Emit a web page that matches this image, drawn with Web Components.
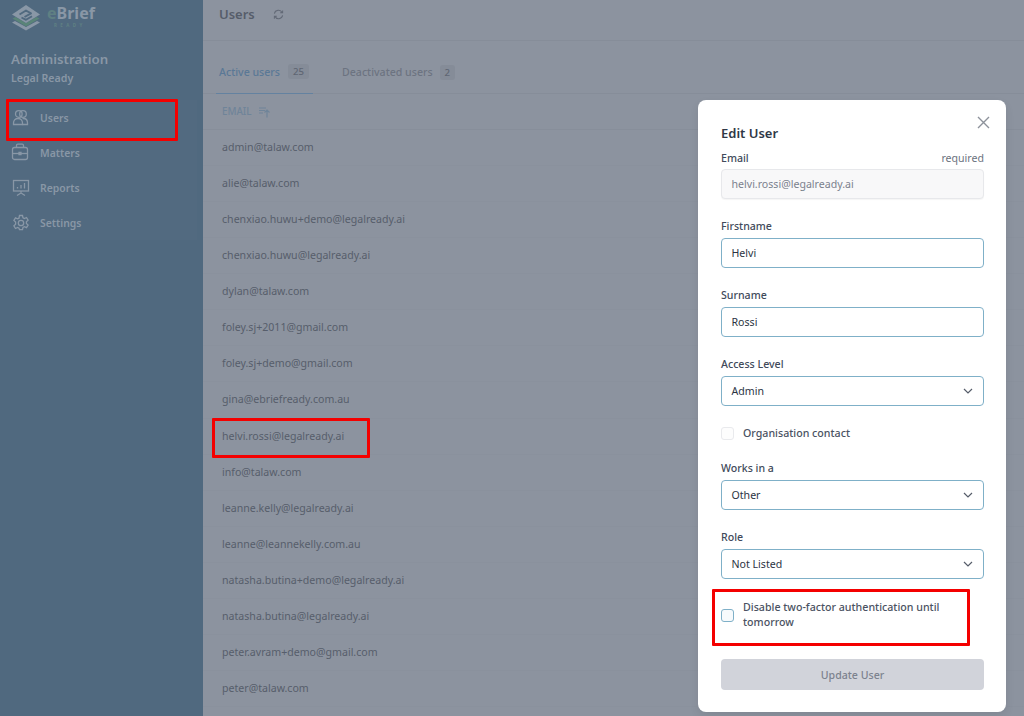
<!DOCTYPE html>
<html>
<head>
<meta charset="utf-8">
<title>Users</title>
<style>
  html, body { margin: 0; height: 100%; overflow: hidden; }
  body { font-family: "Noto Sans", "Open Sans", sans-serif; }
</style>
</head>
<body>
<app-page></app-page>
<script>
const ICONS = {
  users: '<circle cx="7.800" cy="6" r="3.300"/><circle cx="12" cy="6" r="3.300"/><path d="M2.500 16.500v-1.500c0-2.700 2-4.500 4.500-4.500s4.500 1.800 4.500 4.500v1.500z"/><path d="M11.500 10.500h1c2.400 0 4 1.800 4 4.500v1.500h-5"/>',
  matters: '<rect x="1.500" y="4.500" width="15" height="12" rx="2"/><path d="M5.500 4.500V2.500a1.300 1.300 0 0 1 1.300-1.300h4.400a1.300 1.300 0 0 1 1.300 1.300v2"/><path d="M1.500 10.500h15"/><path d="M8 9.500h2v2H8z"/>',
  reports: '<rect x="2.500" y="2.500" width="15" height="10.500"/><path d="M6.500 10.500V9M10 10.500V7M13.500 10.500V5"/><path d="M10 13v2M6 17.500l4-2.500 4 2.500"/>',
  settings: '<path d="M8.500 2.500h3l.5 2.300 1.400.7 2.100-1 1.600 2.600-1.700 1.600v1.800l1.700 1.600-1.600 2.600-2.100-1-1.400.7-.5 2.300h-3L8 15.200l-1.400-.7-2.100 1-1.600-2.600 1.700-1.600V9.100L2.900 7.500l1.600-2.600 2.100 1 1.400-.7z"/><circle cx="10" cy="10" r="2.700"/>'
};

class NavItem extends HTMLElement {
  connectedCallback() {
    this.attachShadow({ mode: 'open' });
    this.shadowRoot.innerHTML = `
      <style>
        :host { display: flex; align-items: center; height: 35px; padding-left: 11px; gap: 9px;
          background: rgba(255,255,255,.012); font-size: 10.400px; font-weight: 600; color: #8997a6; }
        svg { width: 20px; height: 20px; fill: none; stroke: #8997a6; stroke-width: 1.300; }
      </style>
      <svg viewBox="0 0 20 20">${ICONS[this.getAttribute('icon')]}</svg>
      <slot></slot>`;
  }
}
customElements.define('nav-item', NavItem);

class SideBar extends HTMLElement {
  connectedCallback() {
    this.attachShadow({ mode: 'open' });
    this.shadowRoot.innerHTML = `
      <style>
        :host { display: block; width: 203px; flex: none; background: #50697f; box-sizing: border-box; height: 100%; }
        .logo { display: flex; gap: 6px; padding: 4px 0 0 11px; height: 31px; }
        .logo svg { width: 30px; height: 27px; flex: none; }
        .brand { font-size: 16px; font-weight: 700; line-height: 17px; color: #8997a6; padding-top: 1px; }
        .brand b { color: #5f8083; font-weight: 700; }
        .brand small { display: block; font-size: 4.500px; line-height: 7px; letter-spacing: 3.400px; color: #5f8083; padding-left: 7px; }
        .head { padding: 14px 11px 0; height: 53px; box-sizing: border-box; }
        h2 { margin: 0; font-size: 13.300px; line-height: 20px; font-weight: 600; color: #8997a6; }
        p { margin: 0; font-size: 10.600px; line-height: 18px; font-weight: 600; color: #8997a6; }
        nav { margin-top: 12px; margin-right: 6px; }
      </style>
      <div class="logo">
        <svg viewBox="0 0 30 27" stroke-linejoin="round">
          <path d="M1 18.500l3-1.500 11 6 11-6 3 1.500L15 26.500z" fill="#8997a6"/>
          <path d="M1.500 14.500l3-1.500 10.500 6 10.500-6 3 1.500L15 22.500z" fill="#5a8478"/>
          <path d="M1 10.500L15 1l14 9.500L15 19z" fill="#8997a6"/>
          <path d="M8.500 10.500l6.500-4 5 2.800-6.500 3.700M10.500 13.500l4.500 2.300 6-3.600" fill="none" stroke="#50697f" stroke-width="1.900"/>
        </svg>
        <div class="brand"><b>e</b>Brief<small>READY</small></div>
      </div>
      <div class="head"><h2>Administration</h2><p>Legal Ready</p></div>
      <nav>
        <nav-item icon="users">Users</nav-item>
        <nav-item icon="matters">Matters</nav-item>
        <nav-item icon="reports">Reports</nav-item>
        <nav-item icon="settings">Settings</nav-item>
      </nav>`;
  }
}
customElements.define('side-bar', SideBar);

class UserTable extends HTMLElement {
  connectedCallback() {
    this.attachShadow({ mode: 'open' });
    const emails = ['admin@talaw.com', 'alie@talaw.com', 'chenxiao.huwu+demo@legalready.ai',
      'chenxiao.huwu@legalready.ai', 'dylan@talaw.com', 'foley.sj+2011@gmail.com',
      'foley.sj+demo@gmail.com', 'gina@ebriefready.com.au', 'helvi.rossi@legalready.ai',
      'info@talaw.com', 'leanne.kelly@legalready.ai', 'leanne@leannekelly.com.au',
      'natasha.butina+demo@legalready.ai', 'natasha.butina@legalready.ai',
      'peter.avram+demo@gmail.com', 'peter@talaw.com'];
    this.shadowRoot.innerHTML = `
      <style>
        :host { display: block; }
        .th { display: flex; align-items: center; gap: 7px; height: 36px; padding-left: 19px; box-sizing: border-box;
          border-bottom: 1px solid #878e9a; font-size: 9.800px; font-weight: 500; color: #6f8499; }
        .th svg { width: 12px; height: 12px; fill: none; stroke: #6f8499; stroke-width: 1.200; }
        .row { height: 36.070px; line-height: 35.600px; padding-left: 19px; box-sizing: border-box;
          border-bottom: 1px solid #8a919d; font-size: 10.600px; color: #575e6b; }
      </style>
      <div class="th">EMAIL
        <svg viewBox="0 0 12 12"><path d="M0 2h7M0 4.500h6M0 7h4M8 11.500V4M5.500 6.500L8 4l2.500 2.500"/></svg>
      </div>
      ${emails.map(e => `<div class="row">${e}</div>`).join('')}`;
  }
}
customElements.define('user-table', UserTable);

class MainPane extends HTMLElement {
  connectedCallback() {
    this.attachShadow({ mode: 'open' });
    this.shadowRoot.innerHTML = `
      <style>
        :host { display: block; flex: 1; min-width: 0; height: 100%; background: #8c939f; overflow: hidden; }
        header { display: flex; align-items: center; gap: 18px; height: 41px; box-sizing: border-box; padding: 0 0 13px 16px;
          border-bottom: 1px solid #868d99; }
        h1 { margin: 0; font-size: 13px; font-weight: 600; color: #565d6a; }
        header svg { width: 11px; height: 11px; fill: none; stroke: #626976; stroke-width: 1.100; margin-top: 2px; }
        .tabs { display: flex; height: 53px; box-sizing: border-box; padding-left: 13px; border-bottom: 1px solid #868d99; }
        .tab { display: flex; align-items: center; gap: 7px; padding: 9px 3px 0; height: 53px; box-sizing: border-box;
          font-size: 10.600px; font-weight: 500; color: #6c7381; margin-right: 26px; }
        .tab.on { color: #5a7896; border-bottom: 1px solid #6482a0; width: 97px; margin-right: 26px; gap: 8px; }
        .badge { background: #858c98; border-radius: 3px; padding: 0 5px; font-size: 9.600px; line-height: 15px; color: #5f6673; }
      </style>
      <header>
        <h1>Users</h1>
        <svg viewBox="0 0 12 12"><path d="M1.500 5A4.500 4.500 0 0 1 10 4M10.500 7A4.500 4.500 0 0 1 2 8M10.500 1.500V4.200H7.800M1.500 10.500V7.800h2.700"/></svg>
      </header>
      <div class="tabs">
        <div class="tab on">Active users <span class="badge">25</span></div>
        <div class="tab">Deactivated users <span class="badge">2</span></div>
      </div>
      <user-table></user-table>`;
  }
}
customElements.define('main-pane', MainPane);

class FormField extends HTMLElement {
  connectedCallback() {
    this.attachShadow({ mode: 'open' });
    const select = this.hasAttribute('select');
    const disabled = this.hasAttribute('disabled');
    const note = this.getAttribute('note');
    this.shadowRoot.innerHTML = `
      <style>
        :host { display: block; margin-bottom: var(--gap, 19px); }
        .lab { display: flex; justify-content: space-between; height: 16px; line-height: 16px; font-size: 10.600px; font-weight: 500; color: #414a5a; margin-bottom: var(--lab-gap, 4px); }
        .lab span { font-weight: 400; color: #6b7280; }
        .box { display: flex; align-items: center; justify-content: space-between; height: 30px; box-sizing: border-box;
          padding: 0 9.500px; border: 1px solid #7fb0c8; border-radius: 4px; font-size: 10.600px; color: #2b3443; }
        .box.off { background: #f8f8f9; border-color: #e7e8eb; color: #7b818d; box-shadow: 0 1px 1px rgba(0,0,0,.04); }
        svg { width: 10px; height: 6px; fill: none; stroke: #565d6a; stroke-width: 1.200; margin-right: 1px; }
      </style>
      <div class="lab">${this.getAttribute('label')}${note ? `<span>${note}</span>` : ''}</div>
      <div class="box ${disabled ? 'off' : ''}"><slot></slot>
        ${select ? '<svg viewBox="0 0 10 6"><path d="M1 1l4 4 4-4"/></svg>' : ''}
      </div>`;
  }
}
customElements.define('form-field', FormField);

class CheckRow extends HTMLElement {
  connectedCallback() {
    this.attachShadow({ mode: 'open' });
    const on = this.hasAttribute('active');
    this.shadowRoot.innerHTML = `
      <style>
        :host { display: flex; align-items: center; gap: 9px; font-size: 10.650px; font-weight: 500; line-height: 15px; color: #4a5262; }
        i { flex: none; width: 11px; height: 11px; border: 1px solid ${on ? '#7fb0c8' : '#e9eaed'}; border-radius: 3px; background: ${on ? '#f7fafc' : '#fdfdfd'}; }
      </style>
      <i></i><div><slot></slot></div>`;
  }
}
customElements.define('check-row', CheckRow);

class EditUserModal extends HTMLElement {
  connectedCallback() {
    this.attachShadow({ mode: 'open' });
    this.shadowRoot.innerHTML = `
      <style>
        :host { display: block; position: relative; width: 308px; height: 612px; box-sizing: border-box; padding: 24px 22px 0 23px;
          background: #fff; border-radius: 8px; box-shadow: 0 4px 10px rgba(0,0,0,.08); }
        h3 { margin: 0 0 8px; font-size: 13px; line-height: 18px; font-weight: 600; color: #2f3846; }
        .close { position: absolute; top: 16px; right: 16px; width: 13px; height: 13px; fill: none; stroke: #8d929b; stroke-width: 1.400; }
        .c1 { height: 16px; margin: 19px 0; }
        .c2 { margin: 21px 0 0; height: 30px; }
        button { display: block; width: 100%; height: 31px; margin-top: 29px; border: 0; border-radius: 4px; background: #d1d3da;
          font: 500 10.600px "Noto Sans", sans-serif; color: #7c828e; }
      </style>
      <svg class="close" viewBox="0 0 13 13"><path d="M1 1l11 11M12 1L1 12"/></svg>
      <h3>Edit User</h3>
      <form-field label="Email" note="required" disabled style="--lab-gap:3px">helvi.rossi@legalready.ai</form-field>
      <form-field label="Firstname">Helvi</form-field>
      <form-field label="Surname">Rossi</form-field>
      <form-field label="Access Level" select style="--gap:0">Admin</form-field>
      <check-row class="c1">Organisation contact</check-row>
      <form-field label="Works in a" select>Other</form-field>
      <form-field label="Role" select style="--gap:0">Not Listed</form-field>
      <check-row class="c2" active>Disable two-factor authentication until tomorrow</check-row>
      <button type="button">Update User</button>`;
  }
}
customElements.define('edit-user-modal', EditUserModal);

class RedMark extends HTMLElement {
  connectedCallback() {
    this.attachShadow({ mode: 'open' });
    this.shadowRoot.innerHTML = `<style>:host { display: block; position: absolute; box-sizing: border-box; border: 3px solid #f40000; border-radius: 1px; }</style>`;
  }
}
customElements.define('red-mark', RedMark);

class AppPage extends HTMLElement {
  connectedCallback() {
    this.attachShadow({ mode: 'open' });
    this.shadowRoot.innerHTML = `
      <style>
        :host { display: flex; position: relative; width: 1024px; height: 716px; overflow: hidden; }
        .overlay { position: absolute; inset: 0; display: flex; justify-content: flex-end; padding: 100px 18px 0 0; box-sizing: border-box; }
      </style>
      <side-bar></side-bar>
      <main-pane></main-pane>
      <div class="overlay"><edit-user-modal></edit-user-modal></div>
      <red-mark style="left:6px;top:99px;width:172px;height:42px"></red-mark>
      <red-mark style="left:212px;top:418px;width:158px;height:40px"></red-mark>
      <red-mark style="left:712px;top:589px;width:258px;height:57px"></red-mark>`;
  }
}
customElements.define('app-page', AppPage);
</script>
</body>
</html>
